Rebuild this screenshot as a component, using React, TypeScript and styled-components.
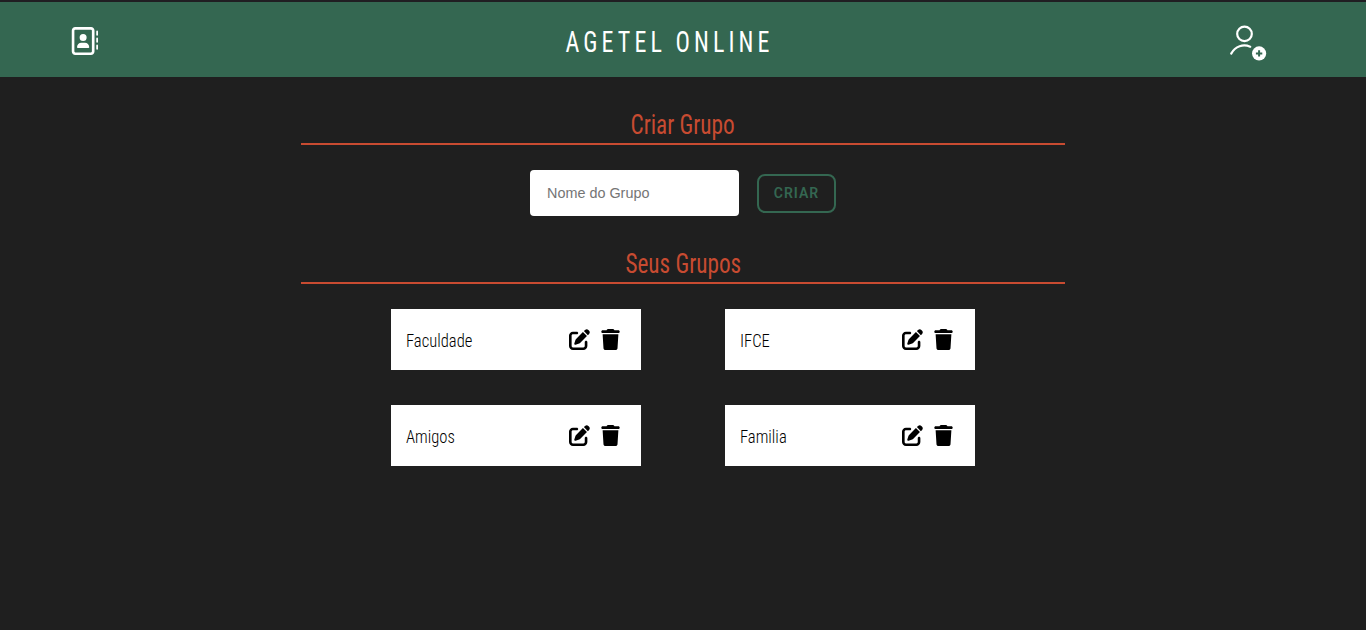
import React from 'react';
import styled, { createGlobalStyle } from 'styled-components';
import { FaRegAddressBook, FaPenToSquare, FaTrash } from 'react-icons/fa6';

const GlobalStyle = createGlobalStyle`
  * { box-sizing: border-box; }
  body { margin: 0; background: #1f1f1f; }
`;

const condensed = `
  font-family: 'Roboto Condensed', Roboto, sans-serif;
  font-stretch: 75%;
`;

const Header = styled.header`
  height: 77px;
  padding: 2px 97px 0 70px;
  border-top: 2px solid #201e22;
  background: #346751;
  color: #fff;
  display: grid;
  grid-template-columns: 40px 1fr 40px;
  align-items: center;
`;

const Brand = styled.h1`
  ${condensed}
  margin: 0;
  padding-top: 3px;
  text-align: center;
  font-size: 30px;
  line-height: 40px;
  font-weight: 400;
  letter-spacing: 5.1px;
  transform: scaleX(0.8);
`;

const IconLink = styled.a`
  display: flex;
  color: inherit;
`;

const Main = styled.main`
  width: 764px;
  margin: 0 auto;
  padding-top: 28px;
`;

const SectionTitle = styled.h2`
  height: 40px;
  margin: 0;
  border-bottom: 2px solid #c84b31;
  color: #c84b31;
  text-align: center;
`;

const SectionLabel = styled.span`
  ${condensed}
  display: inline-block;
  font-size: 27px;
  line-height: 40px;
  font-weight: 400;
  transform: scaleX(0.86);
`;

const CreateForm = styled.form`
  display: flex;
  justify-content: center;
  align-items: center;
  gap: 18px;
  padding: 25px 0 28px;
`;

const NameInput = styled.input`
  width: 209px;
  height: 46px;
  padding: 0 17px;
  border: 0;
  border-radius: 4px;
  background: #fff;
  font-family: 'Liberation Sans', Arial, sans-serif;
  font-size: 14.4px;
  &::placeholder { color: #757575; }
`;

const CreateButton = styled.button`
  width: 79px;
  height: 39px;
  padding: 0;
  border: 2px solid #346751;
  border-radius: 8px;
  background: transparent;
  color: #346751;
  font-family: Roboto, sans-serif;
  font-size: 14px;
  font-weight: 600;
  letter-spacing: 1px;
`;

const GroupGrid = styled.section`
  display: grid;
  grid-template-columns: 250px 250px;
  justify-content: center;
  gap: 35px 84px;
  padding-top: 25px;
`;

const GroupCard = styled.article`
  height: 61px;
  padding: 0 20.5px 0 15px;
  background: #fff;
  color: #000;
  display: flex;
  align-items: center;
  justify-content: space-between;
  &:nth-child(even) { padding-right: 21.5px; padding-left: 14.5px; }
`;

const GroupName = styled.span`
  ${condensed}
  padding-top: 2px;
  font-size: 19.2px;
  line-height: 24px;
  font-weight: 300;
  transform: scaleX(0.865);
  transform-origin: left center;
`;

const Actions = styled.div`
  display: flex;
  align-items: center;
  gap: 10px;
  padding-bottom: 1px;
`;

const groups = ['Faculdade', 'IFCE', 'Amigos', 'Familia'];

function AddUserIcon() {
  return (
    <svg width="38" height="40" viewBox="0 0 38 40" fill="none">
      <circle cx="15.5" cy="12.9" r="7.3" stroke="#fff" strokeWidth="2.2" />
      <path d="M2.2 32.6C6.3 25.2 14.2 22.7 21.2 25.7" stroke="#fff" strokeWidth="2.2" strokeLinecap="round" />
      <circle cx="30.1" cy="32.4" r="7.1" fill="#fff" />
      <path d="M30.1 29.2v6.4M26.9 32.4h6.4" stroke="#346751" strokeWidth="2" />
    </svg>
  );
}

export default function App() {
  return (
    <>
      <GlobalStyle />
      <Header>
        <IconLink><FaRegAddressBook size={28} /></IconLink>
        <Brand>AGETEL ONLINE</Brand>
        <IconLink><AddUserIcon /></IconLink>
      </Header>
      <Main>
        <SectionTitle><SectionLabel>Criar Grupo</SectionLabel></SectionTitle>
        <CreateForm>
          <NameInput placeholder="Nome do Grupo" />
          <CreateButton type="button">CRIAR</CreateButton>
        </CreateForm>
        <SectionTitle><SectionLabel>Seus Grupos</SectionLabel></SectionTitle>
        <GroupGrid>
          {groups.map((name) => (
            <GroupCard key={name}>
              <GroupName>{name}</GroupName>
              <Actions>
                <FaPenToSquare size={21} />
                <FaTrash size={21} />
              </Actions>
            </GroupCard>
          ))}
        </GroupGrid>
      </Main>
    </>
  );
}
